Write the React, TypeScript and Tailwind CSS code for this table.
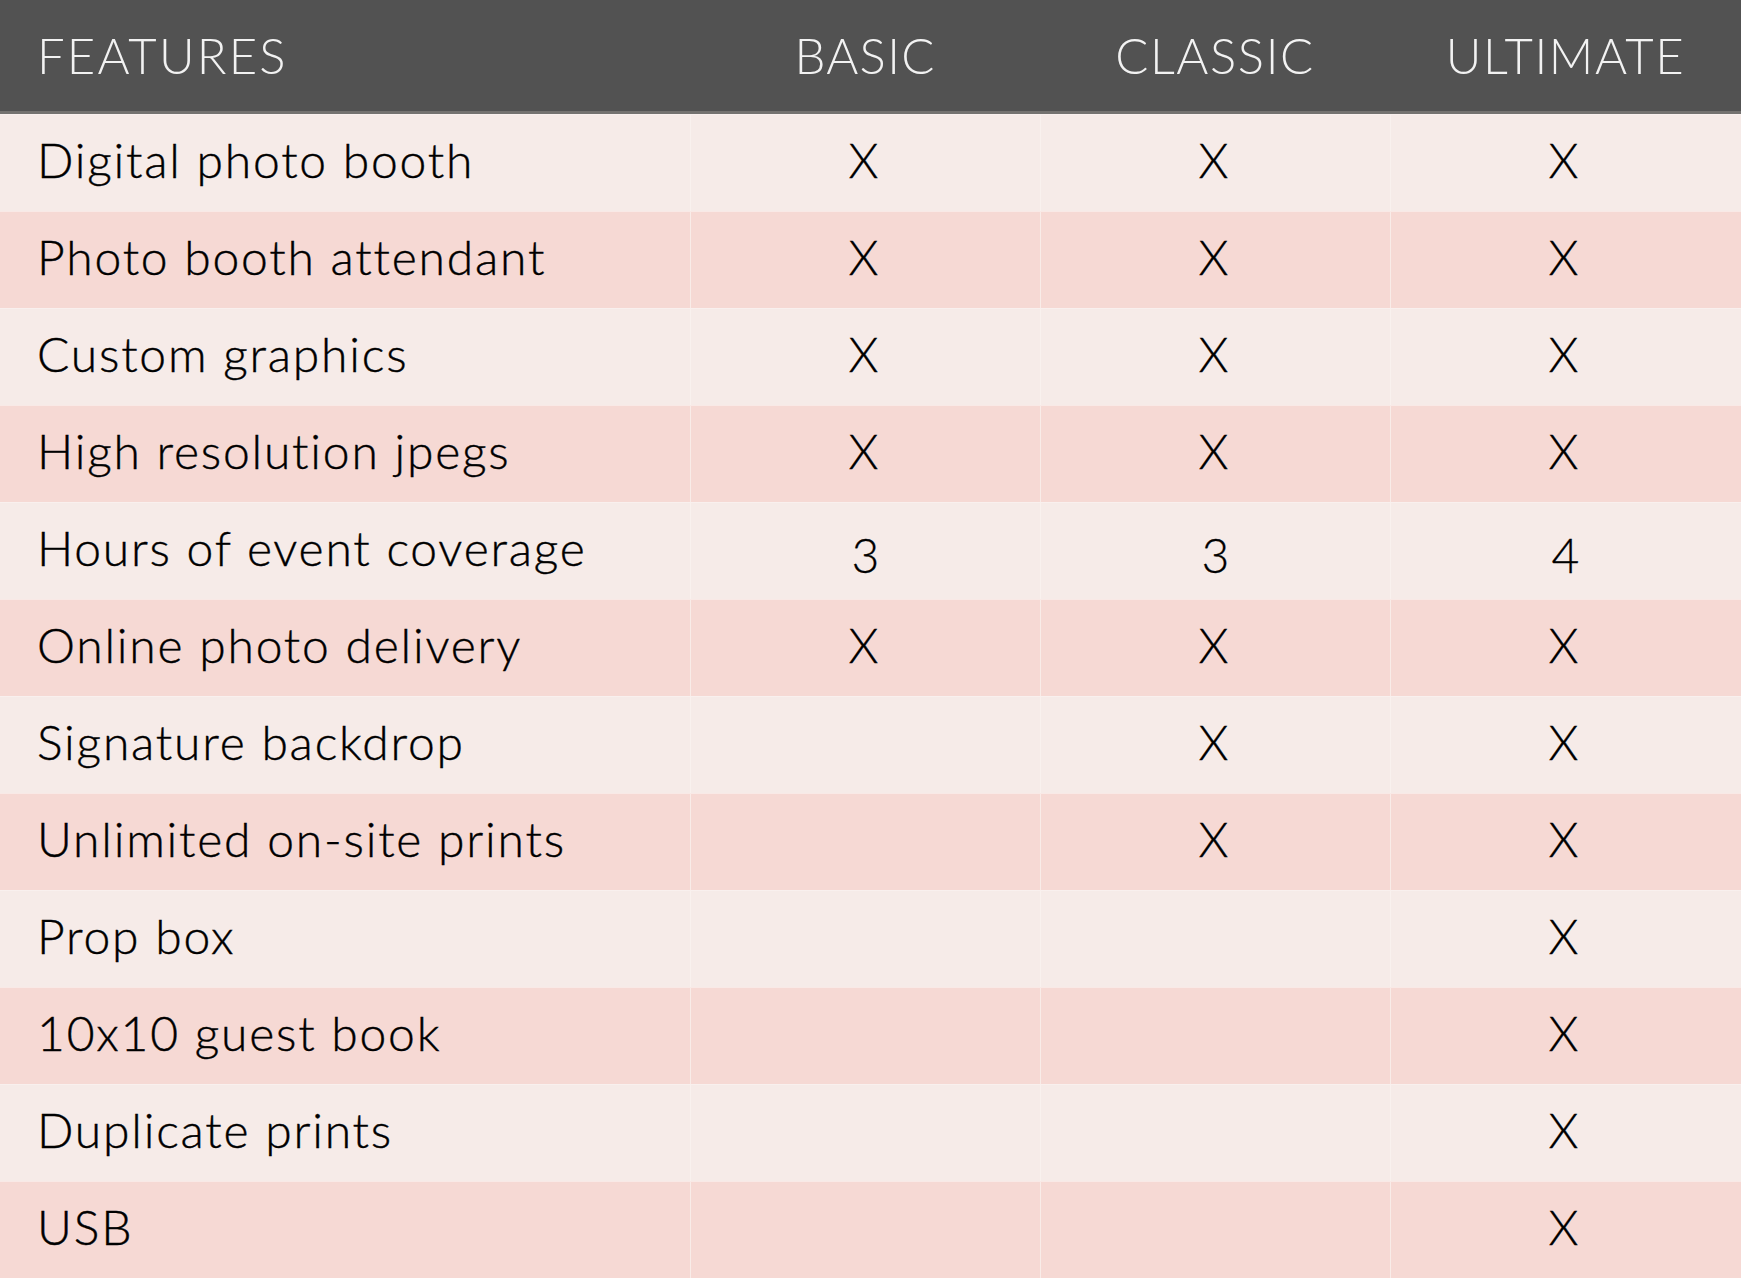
import React from "react";

const rows: [string, string, string, string][] = [
  ["Digital photo booth", "X", "X", "X"],
  ["Photo booth attendant", "X", "X", "X"],
  ["Custom graphics", "X", "X", "X"],
  ["High resolution jpegs", "X", "X", "X"],
  ["Hours of event coverage", "3", "3", "4"],
  ["Online photo delivery", "X", "X", "X"],
  ["Signature backdrop", "", "X", "X"],
  ["Unlimited on-site prints", "", "X", "X"],
  ["Prop box", "", "", "X"],
  ["10x10 guest book", "", "", "X"],
  ["Duplicate prints", "", "", "X"],
  ["USB", "", "", "X"],
];

function Cell({ v }: { v: string }) {
  const isNum = v !== "" && v !== "X";
  return (
    <div className="w-[350px] flex items-center justify-center border-l border-[#fbf3f1]/70">
      <span
        className={
          isNum
            ? "translate-y-[4px] [-webkit-text-stroke:0.3px_black]"
            : "-translate-x-[2px] -translate-y-[3px] [-webkit-text-stroke:0.3px_black]"
        }
      >
        {v}
      </span>
    </div>
  );
}

export default function App() {
  return (
    <div
      className="w-[1741px] h-[1278px] overflow-hidden bg-[#f6ebe8]"
      style={{ fontFamily: "Lato, 'Open Sans', sans-serif" }}
    >
      <div className="h-[114px] flex bg-[#525252] text-[#f2f2f2] text-[49px] font-light border-b-[3px] border-[#747270]">
        <div className="w-[690px] flex items-center pl-[37px] tracking-[2.2px]">FEATURES</div>
        <div className="w-[350px] flex items-center justify-center tracking-[1.3px]">BASIC</div>
        <div className="w-[350px] flex items-center justify-center tracking-[1.6px]">CLASSIC</div>
        <div className="w-[351px] flex items-center justify-center tracking-[1.6px]">ULTIMATE</div>
      </div>
      {rows.map((r, i) => (
        <div
          key={i}
          className={
            "h-[97px] flex text-[48px] font-light text-black border-t border-[#fbf3f1]/60 " +
            (i % 2 === 0 ? "bg-[#f6ebe8]" : "bg-[#f6d9d4]")
          }
        >
          <div className="w-[690px] flex items-center pl-[37px] tracking-[1.8px]">
            <span className="-translate-y-[3px] [-webkit-text-stroke:0.4px_black]">{r[0]}</span>
          </div>
          <Cell v={r[1]} />
          <Cell v={r[2]} />
          <Cell v={r[3]} />
        </div>
      ))}
    </div>
  );
}
